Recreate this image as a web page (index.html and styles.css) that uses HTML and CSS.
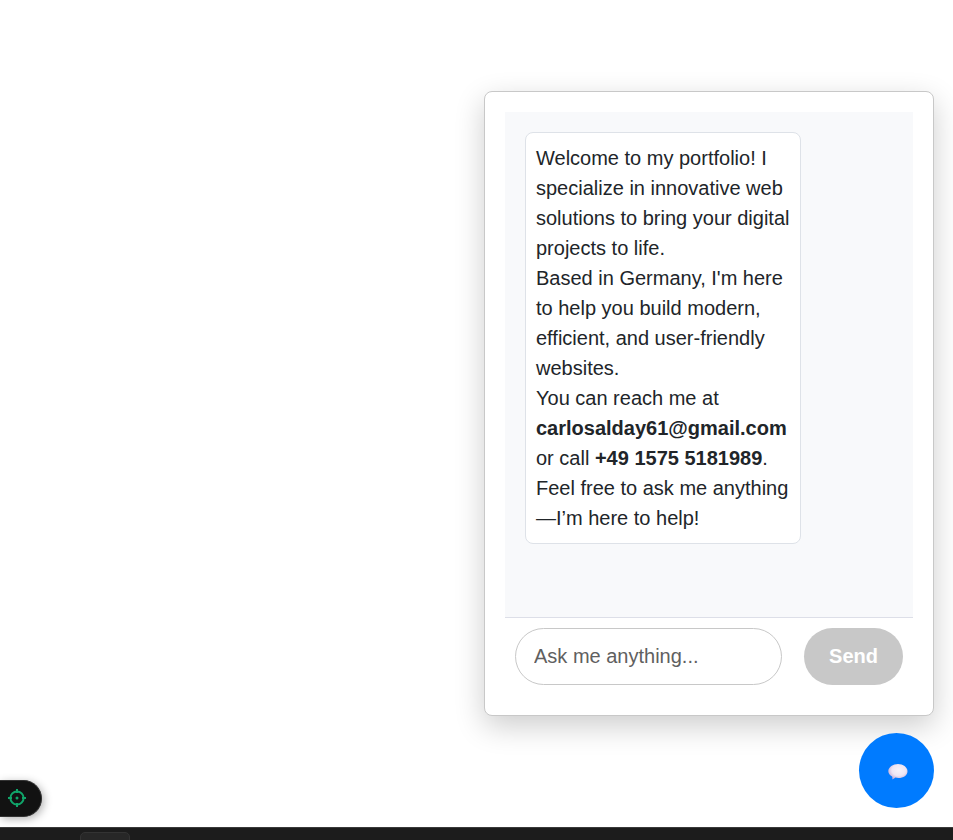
FILE: index.html
```
<!DOCTYPE html>
<html lang="en">
<head>
<meta charset="utf-8">
<meta name="viewport" content="width=device-width, initial-scale=1">
<title>Portfolio chat</title>
<link rel="stylesheet" href="styles.css">
</head>
<body>
<main class="stage">
  <section class="chat">
    <div class="messages">
      <div class="message">Welcome to my portfolio! I specialize in innovative web solutions to bring your digital projects to life.<br>Based in Germany, I'm here to help you build modern, efficient, and user-friendly websites.<br>You can reach me at <strong>carlosalday61@gmail.com</strong> or call <strong>+49 1575 5181989</strong>.<br>Feel free to ask me anything—I’m here to help!</div>
    </div>
    <form class="composer">
      <input class="prompt" type="text" placeholder="Ask me anything..." aria-label="Ask me anything">
      <button class="send" type="submit" disabled>Send</button>
    </form>
  </section>
  <button class="toggle" type="button" aria-label="Toggle chat">
    <svg width="20" height="16" viewBox="0 0 20 16" aria-hidden="true">
      <defs>
        <radialGradient id="cloud" cx=".55" cy=".4" r=".65">
          <stop offset="0" stop-color="#f6f3fb"/>
          <stop offset=".55" stop-color="#eee6f4"/>
          <stop offset="1" stop-color="#bfa3d2"/>
        </radialGradient>
      </defs>
      <path d="M10 0C15 0 19.500 3.200 19.500 7.200C19.500 11.200 15.500 14 10.500 14C9.300 14 8.300 13.800 7.300 13.600C6.500 14.400 5.400 15.200 4 15.500C4.600 14.500 4.500 13.500 4.100 12.400C1.800 11.200 .3 9.400 .3 7.200C.3 3.200 5 0 10 0Z" fill="url(#cloud)"/>
    </svg>
  </button>
</main>
<button class="locator" type="button" aria-label="Locate">
  <svg width="18" height="18" viewBox="0 0 18 18" fill="none" stroke="#10a56a" stroke-width="2" aria-hidden="true">
    <circle cx="9" cy="9" r="6.600"/>
    <path d="M9 0V4M9 14V18M0 9H4M14 9H18"/>
    <circle cx="9" cy="9" r="1.500" fill="#10a56a" stroke="none"/>
  </svg>
</button>
<footer class="dock"><div class="dock-tab"></div></footer>
</body>
</html>
```
FILE: styles.css
```
* {
  box-sizing: border-box;
}

body {
  margin: 0;
  height: 100vh;
  display: flex;
  flex-direction: column;
  overflow: hidden;
  background: #fff;
  color: #212529;
  font: 20px/30px "Liberation Sans", Arial, sans-serif;
}

.stage {
  flex: 1;
  min-height: 0;
  display: flex;
  flex-direction: column;
  align-items: flex-end;
  gap: 17px;
  padding: 91px 19px 19px;
}

.chat {
  flex: 1;
  min-height: 0;
  width: 450px;
  max-width: 100%;
  display: flex;
  flex-direction: column;
  padding: 20px;
  background: #fff;
  border: 1px solid #c8c8c8;
  border-radius: 8px;
  box-shadow: 0 10px 30px rgba(0, 0, 0, 0.2);
}

.messages {
  flex: 1;
  min-height: 0;
  padding: 20px;
  overflow-y: auto;
  background: #f8f9fb;
  border-bottom: 1px solid #dddfe8;
}

.message {
  width: 75%;
  padding: 10px;
  background: #fff;
  border: 1px solid #dee2e8;
  border-radius: 8px;
}

.composer {
  display: flex;
  gap: 22px;
  padding: 10px;
}

.prompt {
  flex: 1;
  min-width: 0;
  height: 57px;
  padding: 0 18px;
  border: 1px solid #c8c8c8;
  border-radius: 30px;
  background: #fff;
  color: inherit;
  font: inherit;
}

.prompt::placeholder {
  color: #5f6060;
  opacity: 1;
}

.send {
  padding: 0 25px 2px;
  border: 0;
  border-radius: 30px;
  background: #c8c8c8;
  color: #fff;
  font: inherit;
  font-weight: bold;
}

.toggle {
  flex: none;
  width: 75px;
  height: 75px;
  display: flex;
  align-items: center;
  justify-content: center;
  padding: 2px 0 0 2px;
  border: 0;
  border-radius: 50%;
  background: #007bff;
}

.locator {
  position: fixed;
  left: 0;
  bottom: 23px;
  width: 42px;
  height: 37px;
  display: flex;
  align-items: center;
  padding: 0 8px 2px;
  border: 1px solid #333;
  border-left: 0;
  border-radius: 0 19px 19px 0;
  background: #121212;
  box-shadow: 2px 2px 8px rgba(0, 0, 0, 0.3);
}

.dock {
  flex: none;
  height: 13px;
  padding: 4px 80px 0;
  overflow: hidden;
  background: #1c1c1c;
  border-top: 1px solid #3a3a3a;
}

.dock-tab {
  width: 50px;
  height: 20px;
  border: 1px solid #333;
  border-radius: 5px;
  background: #272727;
}
```
